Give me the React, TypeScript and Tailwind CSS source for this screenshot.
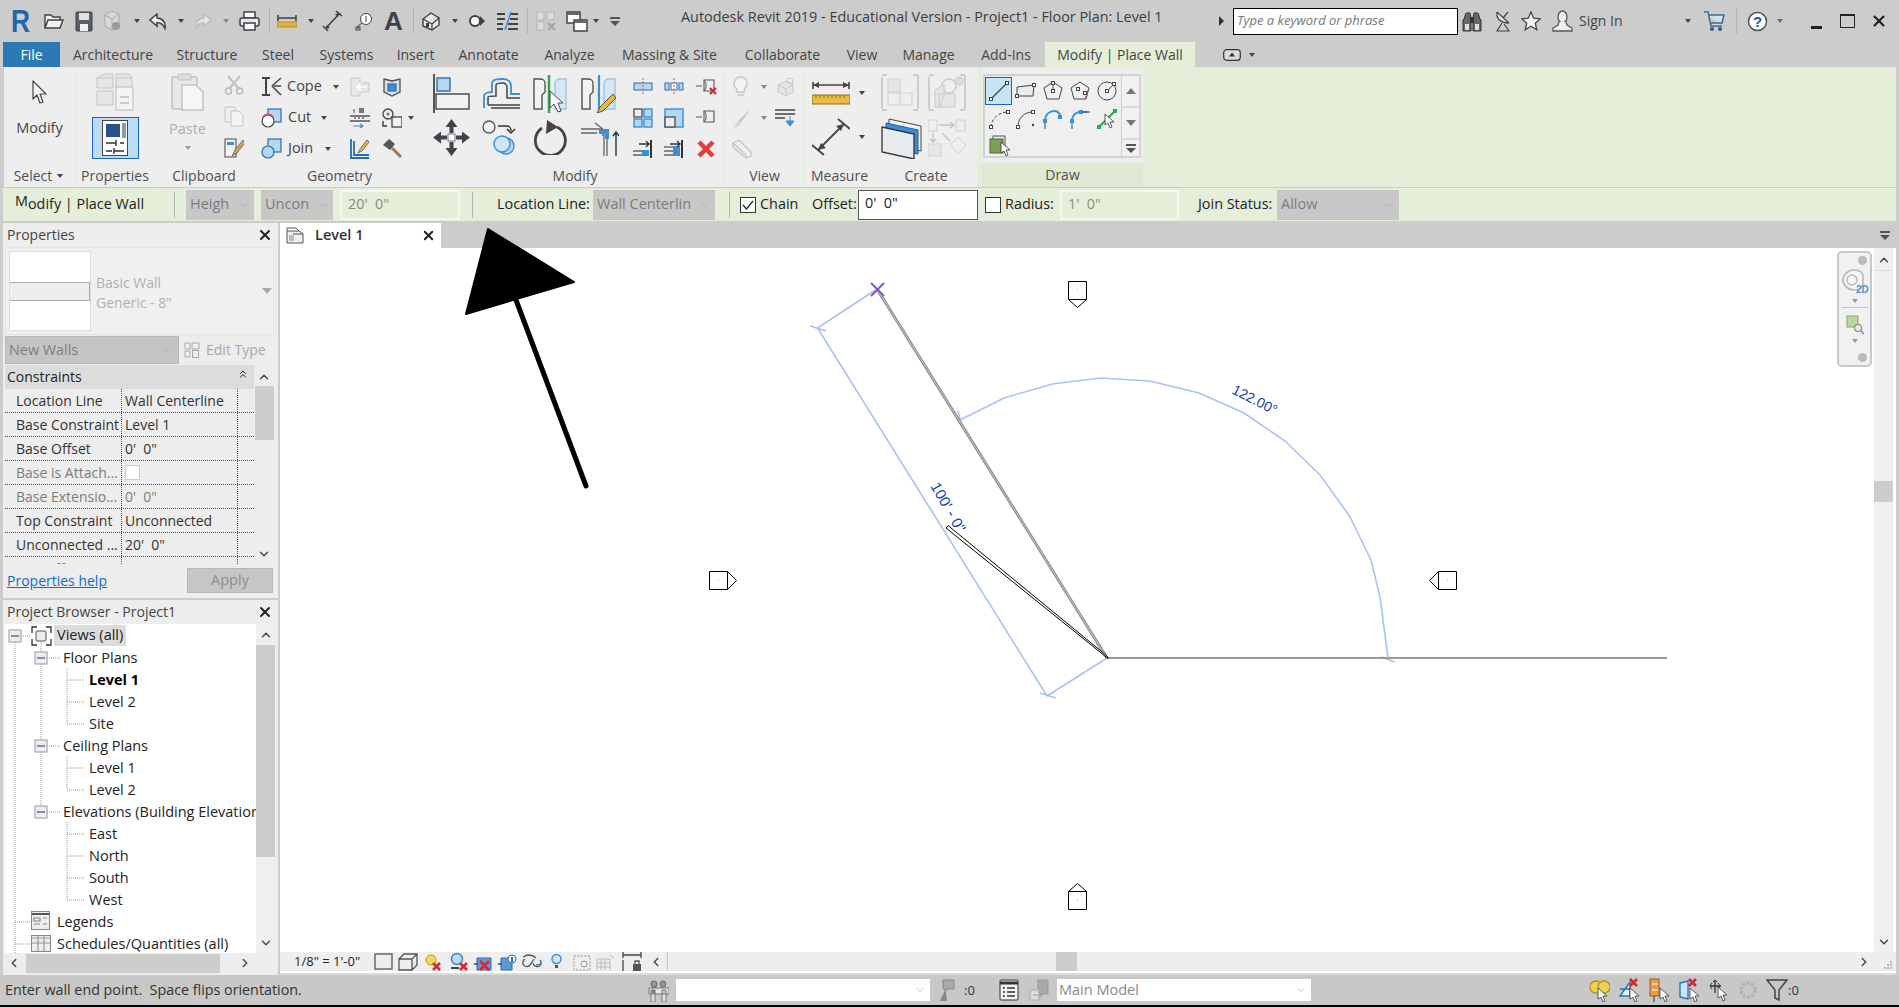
import React from 'react';
import { ChevronDown, ChevronLeft, ChevronRight, ChevronUp, ChevronsUp, X } from 'lucide-react';

type IcProps = { w: number; h: number; children?: React.ReactNode; className?: string };

const Ic = ({ w, h, children, className = '' }: IcProps) => (
    <svg width={w} height={h} viewBox={`0 0 ${w} ${h}`} fill="none" className={`shrink-0 ${className}`}>
        {children}
    </svg>
);

const Dd = ({ className = '' }: { className?: string }) => (
    <Ic w={6} h={4} className={className}>
        <path d="M0 0h6L3 4z" fill="#444" />
    </Ic>
);

const Sep = ({ className = '' }: { className?: string }) => <div className={`w-px h-[26px] bg-[#b4b4b4] shrink-0 ${className}`} />;

const DK = '#3d4248';
const GR = '#bdbdbd';
const BL = '#3b8ed8';
const LB = '#b5d8f2';

// quick access toolbar icons
const OpenIco = ({ className }: { className?: string }) => (
    <Ic w={20} h={16} className={className}>
        <path d="M1 15V2h6l2 2h7v3M1 15l3-8h15l-3 8z" stroke={DK} strokeWidth="1.4" fill="#f0f0f0" />
    </Ic>
);
const SaveIco = ({ className }: { className?: string }) => (
    <Ic w={18} h={21} className={className}>
        <rect x="1" y="1" width="16" height="19" rx="1" fill="#5a6068" stroke={DK} />
        <rect x="4" y="2" width="10" height="7" fill="#dfe3e6" />
        <rect x="5" y="13" width="8" height="7" fill="#f2f2f2" />
    </Ic>
);
const SyncIco = ({ className }: { className?: string }) => (
    <Ic w={18} h={22} className={className}>
        <path d="M2 5l6-4 8 3v11l-7 5-7-4z" fill="#d8d8d8" stroke="#aaa" />
        <path d="M2 5l7 4 7-5M9 9v11" stroke="#aaa" />
        <circle cx="13" cy="16" r="4" fill="#9a9a9a" />
    </Ic>
);
const UndoIco = ({ flip, gray, className }: { flip?: boolean; gray?: boolean; className?: string }) => (
    <Ic w={19} h={17} className={className}>
        <g transform={flip ? 'translate(19 0) scale(-1 1)' : undefined}>
            <path d="M8 1L1 7l7 6V9.5c4 0 6 1.500 8 6 1-6-2-10-8-10.500z" stroke={gray ? GR : DK} strokeWidth="1.500" fill={gray ? '#e8e8e8' : '#f4f4f4'} />
        </g>
    </Ic>
);
const PrintIco = ({ className }: { className?: string }) => (
    <Ic w={21} h={20} className={className}>
        <rect x="5" y="1" width="11" height="6" stroke={DK} strokeWidth="1.500" fill="#fff" />
        <rect x="1" y="7" width="19" height="8" rx="2" fill="#e9e9e9" stroke={DK} strokeWidth="1.500" />
        <rect x="5" y="12" width="11" height="7" stroke={DK} strokeWidth="1.500" fill="#fff" />
    </Ic>
);
const RulerIco = ({ className }: { className?: string }) => (
    <Ic w={20} h={14} className={className}>
        <path d="M1 4h18M1 1v6M19 1v6" stroke={DK} strokeWidth="1.500" />
        <rect x="0" y="8" width="20" height="5" fill="#e2b33a" stroke="#9a7a20" strokeWidth=".7" />
    </Ic>
);
const AlignedIco = ({ className }: { className?: string }) => (
    <Ic w={21} h={22} className={className}>
        <path d="M3 19L18 3M14 1l6 5M1 16l5 5" stroke={DK} strokeWidth="1.500" />
        <path d="M18 3l-5 1 3 3zM3 19l5-1-3-3z" fill={DK} />
    </Ic>
);
const TagIco = ({ className }: { className?: string }) => (
    <Ic w={17} h={20} className={className}>
        <circle cx="11" cy="8" r="5.500" stroke={DK} fill="#fff" />
        <path d="M7 12l-4 3v3" stroke={DK} />
        <rect x="1" y="16" width="4" height="3" stroke={DK} />
        <path d="M11 5v6" stroke={DK} />
    </Ic>
);
const HouseIco = ({ className }: { className?: string }) => (
    <Ic w={20} h={20} className={className}>
        <path d="M2 8l8-6 8 5v7l-7 5-9-4z" fill="#e8e8e8" stroke={DK} strokeWidth="1.400" />
        <path d="M2 8l9 5 7-6M11 13v6" stroke={DK} strokeWidth="1.200" />
        <rect x="5" y="12" width="3" height="4" fill={DK} />
    </Ic>
);
const SectionIco = ({ className }: { className?: string }) => (
    <Ic w={18} h={18} className={className}>
        <circle cx="8" cy="9" r="5" stroke={DK} strokeWidth="2" fill="#fff" />
        <path d="M13 4l5 5-5 5z" fill={DK} />
    </Ic>
);
const ThinIco = ({ className }: { className?: string }) => (
    <Ic w={21} h={18} className={className}>
        <path d="M0 2h8M13 2h8M0 7h8M13 7h8M0 12h6M11 12h10M0 17h6M11 17h10" stroke={DK} strokeWidth="2" />
        <path d="M14 0L8 18" stroke={BL} strokeWidth="1.500" />
    </Ic>
);
const CloseHiddenIco = ({ className }: { className?: string }) => (
    <Ic w={20} h={20} className={className}>
        <rect x="1" y="1" width="7" height="8" fill="#ddd" stroke="#b5b5b5" />
        <rect x="11" y="1" width="7" height="8" fill="#ddd" stroke="#b5b5b5" />
        <rect x="1" y="11" width="7" height="8" fill="#ddd" stroke="#b5b5b5" />
        <path d="M12 12l7 7M19 12l-7 7" stroke="#a5a5a5" strokeWidth="2" />
    </Ic>
);
const SwitchIco = ({ className }: { className?: string }) => (
    <Ic w={22} h={21} className={className}>
        <rect x="1" y="1" width="13" height="11" fill="#fff" stroke={DK} strokeWidth="1.500" />
        <rect x="1" y="1" width="13" height="3" fill="#666" />
        <rect x="8" y="9" width="13" height="11" fill="#fff" stroke={DK} strokeWidth="1.500" />
        <rect x="8" y="9" width="13" height="3" fill="#666" />
    </Ic>
);
const CustomizeIco = ({ className }: { className?: string }) => (
    <Ic w={10} h={9} className={className}>
        <path d="M0 0h10v2H0zM0 4h10L5 9z" fill="#555" />
    </Ic>
);
const BinoIco = ({ className }: { className?: string }) => (
    <Ic w={20} h={21} className={className}>
        <path d="M2 8L4 2h4l1 6v12H1V9zM18 8l-2-6h-4l-1 6v12h8V9z" fill="#666" stroke="#333" />
        <rect x="3" y="13" width="4" height="6" fill="#ddd" />
        <rect x="13" y="13" width="4" height="6" fill="#ddd" />
        <rect x="8.500" y="6" width="3" height="6" fill="#333" />
    </Ic>
);
const SatIco = ({ className }: { className?: string }) => (
    <Ic w={17} h={22} className={className}>
        <path d="M3 2c-1 6 3 11 12 11" stroke="#444" strokeWidth="1.300" fill="#e8e8e8" />
        <path d="M3 2l12 11M9 8l5-6M8 13l-5 8h12l-5-7" stroke="#444" strokeWidth="1.200" />
    </Ic>
);
const StarIco = ({ className }: { className?: string }) => (
    <Ic w={20} h={20} className={className}>
        <path d="M10 1l2.700 6.200 6.600.6-5 4.400 1.500 6.600L10 15.300l-5.800 3.500 1.500-6.600-5-4.400 6.600-.6z" stroke="#444" strokeWidth="1.300" fill="#f4f4f4" />
    </Ic>
);
const PersonIco = ({ className }: { className?: string }) => (
    <Ic w={21} h={22} className={className}>
        <ellipse cx="10.500" cy="7" rx="4.500" ry="6" stroke="#555" strokeWidth="1.300" fill="#eee" />
        <path d="M7 12l-1 3-5 3v3h19v-3l-5-3-1-3" stroke="#555" strokeWidth="1.300" fill="#eee" />
    </Ic>
);
const CartIco = ({ className }: { className?: string }) => (
    <Ic w={22} h={21} className={className}>
        <path d="M1 1h4l3 14h11M5 4h16l-2 8H7" stroke="#3f6a8f" strokeWidth="1.500" fill="#d5e0ea" />
        <circle cx="9" cy="18" r="2" fill="#3f5a7a" />
        <circle cx="17" cy="18" r="2" fill="#3f5a7a" />
    </Ic>
);
const HelpIco = ({ className }: { className?: string }) => (
    <Ic w={21} h={21} className={className}>
        <circle cx="10.500" cy="10.500" r="9" fill="#fff" stroke="#555" strokeWidth="1.500" />
        <text x="10.500" y="16" textAnchor="middle" fontSize="15" fontWeight="700" fill="#1d4fb5" fontFamily="Liberation Sans, sans-serif">?</text>
    </Ic>
);

// ribbon icons
const CursorIco = () => (
    <Ic w={15} h={26}>
        <path d="M1 1l0 18 4-4 3 8 3-1-3-8h6z" fill="#f4f4f4" stroke="#444" strokeWidth="1.200" strokeLinejoin="round" />
    </Ic>
);
const PropsGrayIco = () => (
    <Ic w={38} h={38}>
        <path d="M1 5l7-4h9v14H1zM20 1h13l3 3v12H20zM1 18h16v14H1z" fill="#e6e6e6" stroke="#c4c4c4" />
        <path d="M1 5h16M20 5h16" stroke="#c4c4c4" />
        <rect x="20" y="14" width="17" height="23" fill="#f4f4f4" stroke="#bbb" />
        <path d="M24 24h9M24 30h9" stroke="#bbb" strokeWidth="1.500" />
    </Ic>
);
const PropsBtnIco = () => (
    <div className="w-[47px] h-[42px] bg-[#bcdcf5] border border-[#1668c6] flex items-center justify-center mt-[6px]">
        <Ic w={26} h={36}>
            <rect x=".5" y=".5" width="25" height="35" fill="#fff" stroke="#444" />
            <rect x="4" y="4" width="14" height="13" fill="#27528f" />
            <rect x="20" y="3" width="4" height="15" fill="#8b9aab" />
            <path d="M4 23h10M12 31h10M4 31h6M18 23h4M14 20v6M12 28v6" stroke="#333" strokeWidth="1.400" />
        </Ic>
    </div>
);
const PasteIco = () => (
    <Ic w={33} h={38}>
        <rect x="1" y="4" width="25" height="32" rx="2" fill="#e8e8e8" stroke="#c2c2c2" strokeWidth="1.500" />
        <rect x="7" y="1" width="13" height="6" rx="1" fill="#ddd" stroke="#c2c2c2" />
        <path d="M11 12h14l7 7v18H11z" fill="#f6f6f6" stroke="#c2c2c2" strokeWidth="1.500" />
    </Ic>
);
const ScissorIco = () => (
    <Ic w={20} h={20}>
        <path d="M4 1l11 13M16 1L5 14" stroke="#c4c4c4" strokeWidth="2.400" />
        <circle cx="4.500" cy="16" r="3" stroke="#bbb" strokeWidth="1.500" />
        <circle cx="15.500" cy="16" r="3" stroke="#bbb" strokeWidth="1.500" />
    </Ic>
);
const CopyIco = () => (
    <Ic w={20} h={21}>
        <path d="M1 1h10v15H1z" fill="#eee" stroke="#c4c4c4" />
        <path d="M7 5h8l4 4v11H7z" fill="#f4f4f4" stroke="#c4c4c4" />
    </Ic>
);
const MatchIco = () => (
    <Ic w={20} h={21}>
        <rect x="1" y="1" width="11" height="18" fill="#f2f2f2" stroke="#444" />
        <rect x="3" y="4" width="7" height="3" fill="#3b8ed8" />
        <path d="M19 2l-8 10-3 6 5-3 8-10z" fill="#c9a25a" stroke="#555" strokeWidth=".7" />
    </Ic>
);
const CopeIco = () => (
    <Ic w={21} h={19}>
        <path d="M1 1h8M1 18h8M5 1v17" stroke="#444" strokeWidth="2" />
        <path d="M11 9l9-8M11 9l9 9M13 9h7" stroke="#444" strokeWidth="1.500" />
    </Ic>
);
const CutGeoIco = () => (
    <Ic w={21} h={20}>
        <rect x="7" y="1" width="13" height="13" fill={LB} stroke="#2a6db5" strokeWidth="1.200" />
        <circle cx="7" cy="13" r="6" fill="#fff" stroke="#444" strokeWidth="1.200" />
        <path d="M2 9a6 6 0 0 1 10 0" stroke="#e5484d" strokeWidth="1.400" />
    </Ic>
);
const JoinGeoIco = () => (
    <Ic w={21} h={21}>
        <rect x="7" y="1" width="13" height="13" fill={LB} stroke="#2a6db5" strokeWidth="1.200" />
        <circle cx="7" cy="14" r="6" fill={LB} stroke="#2a6db5" strokeWidth="1.200" />
    </Ic>
);
const WallJoinIco = () => (
    <Ic w={20} h={20}>
        <path d="M1 1h9v5h9v9h-9v4H1z" fill="#e6e6e6" stroke="#c7c7c7" />
        <path d="M17 10H7M11 6l-4 4 4 4" stroke="#fff" strokeWidth="1.500" />
    </Ic>
);
const OpenFaceIco = () => (
    <Ic w={20} h={20}>
        <path d="M2 2l8 2 8-2v13l-8 4-8-4z" fill="#d8dee3" stroke="#4a5056" strokeWidth="1.300" />
        <rect x="6" y="7" width="8" height="7" fill="#3b8ed8" stroke="#245e98" />
    </Ic>
);
const NotchIco = () => (
    <Ic w={20} h={20}>
        <rect x="9" y="0" width="5" height="5" fill="#777" />
        <path d="M4 1v4" stroke={BL} strokeWidth="1.500" />
        <path d="M0 8h20M0 13h20" stroke="#555" strokeWidth="1.500" />
        <path d="M4 10h12" stroke="#888" strokeDasharray="2 2" strokeWidth="2" />
        <path d="M3 18h10M10 16l3 2-3 2" stroke={BL} strokeWidth="1.200" />
    </Ic>
);
const CutFaceIco = () => (
    <Ic w={20} h={20}>
        <circle cx="6" cy="6" r="5" stroke="#444" strokeWidth="1.300" />
        <circle cx="6" cy="6" r="1.500" fill="#777" />
        <rect x="10" y="9" width="10" height="10" fill="#f4f4f4" stroke="#444" strokeWidth="1.300" />
        <path d="M1 13v5h4" stroke="#333" strokeWidth="1.300" />
    </Ic>
);
const PaintIco = () => (
    <Ic w={20} h={21}>
        <path d="M1 1v19h18M4 3v14h15" stroke="#1f6dc2" strokeWidth="1.800" />
        <path d="M17 2l-7 9-2 4 4-2 7-9z" fill="#e8b93f" stroke="#555" strokeWidth=".8" />
    </Ic>
);
const HammerIco = () => (
    <Ic w={20} h={21}>
        <path d="M1 7l6-6 6 5-5 6z" fill="#555" />
        <path d="M10 10l9 9" stroke="#a97355" strokeWidth="3" />
    </Ic>
);
const AlignIco = () => (
    <Ic w={37} h={39}>
        <path d="M1 0v39" stroke="#444" strokeWidth="1.800" />
        <rect x="4" y="4" width="13" height="13" fill={LB} stroke="#2a6db5" strokeWidth="1.400" />
        <rect x="3" y="20" width="33" height="15" fill="#f0f2f4" stroke="#444" strokeWidth="1.400" />
    </Ic>
);
const OffsetIco = () => (
    <Ic w={38} h={32}>
        <path d="M2 30V18c0-4 8-4 8-4V6c0-5 6-5 11-5s8 3 8 7v8h9" stroke={BL} strokeWidth="1.800" />
        <path d="M6 27v-8c0-1 4-1 8-1V7c0-2 5-2 7-2s4 2 4 4v11h13M6 27h32M9 30h29" stroke="#444" strokeWidth="1.500" />
    </Ic>
);
const MirrorPickIco = () => (
    <Ic w={34} h={38}>
        <path d="M1 4h6c3 0 5 2 5 4v9l-3 3v14H1z" fill="#f2f2f2" stroke="#555" strokeWidth="1.400" />
        <path d="M16 0v38" stroke="#2da84a" strokeWidth="2.500" />
        <path d="M33 4h-6c-3 0-5 2-5 4v26h11z" fill="#d5e7f5" stroke="#9dc3e4" strokeWidth="1.400" />
        <path d="M17 16v17l4-4 4 8 3-1-3-8h5z" fill="#fff" stroke="#444" />
    </Ic>
);
const MirrorDrawIco = () => (
    <Ic w={36} h={38}>
        <path d="M1 4h6c3 0 5 2 5 4v9l-3 3v14H1z" fill="#f2f2f2" stroke="#555" strokeWidth="1.400" />
        <path d="M18 0v36" stroke={BL} strokeWidth="2.200" />
        <path d="M34 4h-6c-3 0-5 2-5 4v26h11z" fill="#d5e7f5" stroke="#9dc3e4" strokeWidth="1.400" />
        <path d="M32 19l-13 13-3 6 6-2 13-13z" fill="#e8b93f" stroke="#555" />
    </Ic>
);
const MoveIco = () => (
    <Ic w={37} h={37}>
        <path d="M18.500 0l6 8h-4v6h-4V8h-4zM18.500 37l6-8h-4v-6h-4v6h-4zM0 18.500l8-6v4h6v4H8v4zM37 18.500l-8-6v4h-6v4h6v4z" fill="#3f444a" />
        <rect x="15" y="15" width="7" height="7" fill="#fff" stroke="#777" />
    </Ic>
);
const CopyModIco = () => (
    <Ic w={35} h={35}>
        <circle cx="7" cy="7" r="6" fill="#eef0f2" stroke="#555" strokeWidth="1.300" />
        <path d="M16 6h9c2 0 4 2 4 5M25 9l4 4 4-4" stroke="#333" strokeWidth="1.500" />
        <circle cx="24" cy="26" r="8" fill="#b5d8f2" stroke="#3b8ed8" strokeWidth="1.400" />
        <circle cx="20" cy="24" r="8" fill="#cfe5f6" stroke="#3b8ed8" strokeWidth="1.400" />
    </Ic>
);
const RotateIco = () => (
    <Ic w={34} h={35}>
        <path d="M9 8a15 15 0 1 0 15-1" stroke="#444" strokeWidth="2.800" />
        <path d="M14 0l11 7-12 7z" fill="#444" />
    </Ic>
);
const TrimIco = () => (
    <Ic w={38} h={36}>
        <path d="M0 9h22M0 13h16M14 3l8 6" stroke="#666" strokeWidth="1.300" />
        <path d="M18 10h7c1 0 1 1 1 2v24M21 15h2v21" stroke="#666" strokeWidth="1.300" />
        <path d="M18 9h10v10h-4v-5h-6z" fill={BL} />
        <path d="M35 36V12M32 16l3-4 3 4" stroke="#333" strokeWidth="1.400" />
    </Ic>
);
const SplitIco = ({ gap }: { gap?: boolean }) => (
    <Ic w={20} h={17}>
        <rect x="1" y="5" width={gap ? 4 : 18} height="7" fill={LB} stroke="#2a6db5" />
        {gap && <rect x="15" y="5" width="4" height="7" fill={LB} stroke="#2a6db5" />}
        {gap && <rect x="7" y="5" width="6" height="7" fill="#fff" stroke="#2a6db5" />}
        <path d="M10 0v17" stroke="#e5484d" strokeDasharray="2 1.500" />
    </Ic>
);
const PinIco = ({ x }: { x?: boolean }) => (
    <Ic w={21} h={17}>
        <path d="M0 8h6M8 2h10v11H8zM18 4v8" stroke="#555" strokeWidth="1.100" />
        <path d="M8 2l2 3v5l-2 3" stroke="#555" />
        {x && <path d="M14 10l6 6M20 10l-6 6" stroke="#d8262c" strokeWidth="2.200" />}
    </Ic>
);
const ArrayIco = () => (
    <Ic w={20} h={20}>
        <rect x="1" y="1" width="8" height="8" stroke="#555" strokeWidth="1.400" />
        <rect x="11" y="1" width="8" height="8" fill={LB} stroke={BL} strokeWidth="1.400" />
        <rect x="1" y="11" width="8" height="8" fill={LB} stroke={BL} strokeWidth="1.400" />
        <rect x="11" y="11" width="8" height="8" fill={LB} stroke={BL} strokeWidth="1.400" />
    </Ic>
);
const ScaleIco = () => (
    <Ic w={20} h={20}>
        <rect x="1" y="1" width="18" height="18" fill={LB} stroke={BL} strokeWidth="1.400" />
        <rect x="1" y="9" width="10" height="10" fill="#eee" stroke="#555" strokeWidth="1.400" />
    </Ic>
);
const ExtIco = ({ multi }: { multi?: boolean }) => (
    <Ic w={20} h={20}>
        <path d="M18 1v18" stroke="#333" strokeWidth="2" />
        <path d="M0 12h9M0 16h9" stroke="#666" strokeWidth="1.400" />
        {multi && <path d="M0 8h9" stroke="#666" strokeWidth="1.400" />}
        <rect x="9" y={multi ? 7 : 11} width="7" height={multi ? 10 : 6} fill={BL} />
        <path d="M6 5h10M13 2l3 3-3 3" stroke="#333" strokeWidth="1.300" />
    </Ic>
);
const DelIco = () => (
    <Ic w={20} h={20}>
        <path d="M3 3l14 14M17 3L3 17" stroke="#e63b3b" strokeWidth="4.500" />
    </Ic>
);
const BulbIco = () => (
    <Ic w={17} h={21}>
        <path d="M8.500 1a6.500 6.500 0 0 0-4 11.500V16h8v-3.500a6.500 6.500 0 0 0-4-11.500zM5 19h7" stroke="#c8c8c8" strokeWidth="1.400" fill="#f4f4f4" />
    </Ic>
);
const ViewCubeIco = () => (
    <Ic w={20} h={20}>
        <path d="M3 8l8-4 7 3v8l-7 4-8-4z" fill="#e4e4e4" stroke="#c8c8c8" />
        <path d="M3 8l8 4 7-5M11 12v7" stroke="#c8c8c8" />
        <circle cx="15" cy="4" r="3" stroke="#ccc" />
    </Ic>
);
const BrushIco = () => (
    <Ic w={20} h={20}>
        <path d="M19 1L9 10l-3 3 2 2 3-3z" fill="#c8c8c8" />
        <path d="M7 13c-4 1-3 4-6 6 4 1 7 0 8-4z" fill="#d8d8d8" />
    </Ic>
);
const ThinDownIco = () => (
    <Ic w={20} h={20}>
        <path d="M0 2h20M0 6h20M0 10h10" stroke="#444" strokeWidth="1.500" />
        <path d="M15 8v7M11 13h8l-4 5z" stroke={BL} fill={BL} />
    </Ic>
);
const WireBoxIco = () => (
    <Ic w={20} h={20}>
        <path d="M1 4l6-3 12 12v4l-5 2L1 8z" fill="#efefef" stroke="#c4c4c4" strokeWidth="1.300" />
        <path d="M1 4l13 12v3" stroke="#c4c4c4" strokeWidth="1.300" />
    </Ic>
);
const MeasureIco = () => (
    <Ic w={38} h={24}>
        <path d="M1 4h36M1 1v7M37 1v7" stroke="#444" strokeWidth="1.600" />
        <path d="M1 4l6-3v6zM37 4l-6-3v6z" fill="#444" />
        <rect x="0" y="14" width="38" height="9" fill="#e9bb3e" stroke="#8a7020" />
        <path d="M4 14v3M8 14v3M12 14v3M16 14v3M20 14v3M24 14v3M28 14v3M32 14v3" stroke="#8a7020" />
    </Ic>
);
const DimIco = () => (
    <Ic w={38} h={38}>
        <path d="M6 32L32 6" stroke="#444" strokeWidth="1.800" />
        <path d="M26 1l12 10M0 27l12 10" stroke="#444" strokeWidth="1.800" />
        <path d="M32 6l-8 2 5 5zM6 32l8-2-5-5z" fill="#444" />
    </Ic>
);
const CreateIco = ({ gear }: { gear?: boolean }) => (
    <Ic w={38} h={40}>
        <path d="M1 4v32M1 2h5M1 37h5M37 2v34M37 2h-5M37 37h-5" stroke="#cccccc" strokeWidth="2" />
        {gear ? (
            <>
                <circle cx="21" cy="13" r="7" stroke="#cdcdcd" strokeWidth="1.500" />
                <path d="M7 17l9-5v10l-4 12H7zM11 21h16v13H11z" fill="#e6e6e6" stroke="#c8c8c8" />
                <circle cx="31" cy="8" r="4" fill="#ddd" stroke="#cbcbcb" />
            </>
        ) : (
            <>
                <rect x="7" y="6" width="12" height="13" fill="#e6e6e6" stroke="#cfcfcf" />
                <rect x="7" y="20" width="12" height="12" fill="#eee" stroke="#cfcfcf" />
                <rect x="19" y="20" width="12" height="12" fill="#eee" stroke="#cfcfcf" />
            </>
        )}
    </Ic>
);
const StackIco = () => (
    <Ic w={41} h={41}>
        <path d="M8 1l32 7v25L8 27z" fill="#f2f2f2" stroke="#444" />
        <path d="M5 5l32 7v24L5 30z" fill={BL} stroke="#1f5f9e" />
        <path d="M1 9l32 7v25L1 34z" fill="#e8ebee" stroke="#333" strokeWidth="1.300" />
    </Ic>
);
const FlowIco = () => (
    <Ic w={38} h={38}>
        <rect x="0" y="1" width="9" height="11" fill="#eee" stroke="#cfcfcf" />
        <rect x="28" y="1" width="9" height="11" fill="#eee" stroke="#cfcfcf" />
        <rect x="0" y="25" width="13" height="12" fill="#e6e6e6" stroke="#cfcfcf" />
        <path d="M11 6h15M22 3l4 3-4 3M5 14v9M2 20l3 3 3-3M14 14l8 8" stroke="#c4c4c4" strokeWidth="1.400" />
        <path d="M30 18l8 8-8 9-8-9z" fill="#eee" stroke="#cfcfcf" />
    </Ic>
);

// draw gallery
const P = ({ x, y, c = '#444' }: { x: number; y: number; c?: string }) => (
    <rect x={x - 1.500} y={y - 1.500} width="3" height="3" fill="#fff" stroke={c} />
);
const galleryIcons: React.ReactNode[] = [
    <><path d="M3 19L19 3" stroke="#444" strokeWidth="1.200" /><P x={3} y={19} /><P x={19} y={3} /></>,
    <><path d="M2 7l17-2-1 11H2z" fill="#e8edf2" stroke="#444" /><P x={2} y={16} /><P x={19} y={5} /></>,
    <><path d="M11 2l9 6-3 11H5L2 8z" fill="#eef1f4" stroke="#444" /><path d="M11 2v8" stroke="#444" /><P x={11} y={3} /><P x={11} y={11} /></>,
    <><path d="M11 2l9 6-3 11H5L2 8z" fill="#eef1f4" stroke="#444" /><P x={9} y={9} /><P x={16} y={13} /><path d="M19 10l-3 9" stroke="#e5484d" strokeDasharray="2 1" /></>,
    <><circle cx="11" cy="11" r="9" fill="#eef1f4" stroke="#444" /><path d="M11 11l7-7" stroke="#444" /><P x={11} y={11} /><P x={18} y={4} /></>,
    <><path d="M3 19c0-8 8-15 17-15" stroke="#444" strokeDasharray="3 2" /><P x={3} y={19} /><P x={20} y={4} /></>,
    <><path d="M3 19C3 10 9 4 18 4" stroke="#444" /><P x={3} y={19} /><P x={18} y={4} /><circle cx="18" cy="17" r="1.200" fill="#444" /></>,
    <><path d="M3 13C3 6 8 3 12 3s6 2 6 6" stroke={BL} strokeWidth="1.800" /><rect x="1" y="11" width="4" height="4" fill={BL} /><rect x="16" y="7" width="4" height="4" fill={BL} /><path d="M3 15v6" stroke="#444" /></>,
    <><path d="M3 13c0-6 4-9 9-9h6" stroke={BL} strokeWidth="1.800" /><rect x="1" y="11" width="4" height="4" fill={BL} /><rect x="10" y="2" width="4" height="4" fill={BL} /><path d="M3 15v6M15 4h6" stroke="#444" /></>,
];

const RowLabel = ({ children, className = '' }: { children: React.ReactNode; className?: string }) => (
    <div className={`text-[14.5px] leading-none text-[#444] whitespace-nowrap ${className}`}>{children}</div>
);

const Panel = ({ label, className, children }: { label: React.ReactNode; className: string; children: React.ReactNode }) => (
    <div className={`bg-[#eeeeee] flex flex-col shrink-0 h-[119px] ${className}`}>
        <div className="h-[97px]">{children}</div>
        <div className="h-[22px] flex items-center justify-center text-[14px] text-[#505050] leading-none whitespace-nowrap">{label}</div>
    </div>
);

const Combo = ({ text, className = '' }: { text: string; className?: string }) => (
    <div className={`h-[30px] bg-[#c8c8c8] flex items-center shrink-0 pl-[4px] text-[14.5px] text-[#7c7c7c] whitespace-nowrap ${className}`}>
        <span className="flex-1">{text}</span>
        <ChevronDown className="w-[12px] h-[12px] text-[#a2a2a2] mx-[4px] shrink-0" strokeWidth={1.200} />
    </div>
);

const props = [
    { k: 'Location Line', v: 'Wall Centerline' },
    { k: 'Base Constraint', v: 'Level 1' },
    { k: 'Base Offset', v: `0'  0"` },
    { k: 'Base is Attach...', v: '', box: true, dim: true },
    { k: 'Base Extensio...', v: `0'  0"`, dim: true },
    { k: 'Top Constraint', v: 'Unconnected' },
    { k: 'Unconnected ...', v: `20'  0"` },
    { k: 'Top Offset', v: `0'  0"`, dim: true },
];

const tree = [
    { t: 'Floor Plans', p: 'pl-[58px]' },
    { t: 'Level 1', p: 'pl-[84px]', b: true },
    { t: 'Level 2', p: 'pl-[84px]' },
    { t: 'Site', p: 'pl-[84px]' },
    { t: 'Ceiling Plans', p: 'pl-[58px]' },
    { t: 'Level 1', p: 'pl-[84px]' },
    { t: 'Level 2', p: 'pl-[84px]' },
    { t: 'Elevations (Building Elevations)', p: 'pl-[58px]' },
    { t: 'East', p: 'pl-[84px]' },
    { t: 'North', p: 'pl-[84px]' },
    { t: 'South', p: 'pl-[84px]' },
    { t: 'West', p: 'pl-[84px]' },
    { t: 'Legends', p: 'pl-[52px]' },
    { t: 'Schedules/Quantities (all)', p: 'pl-[52px]' },
];

const Minus = ({ x, y }: { x: number; y: number }) => (
    <g>
        <rect x={x} y={y} width="12" height="12" fill="#eeeeee" stroke="#9a9a9a" />
        <path d={`M${x + 2} ${y + 6}h8`} stroke="#2b4fa8" strokeWidth="1.200" />
    </g>
);

// dotted lines and expander boxes behind the project browser rows
const TreeLines = () => (
    <svg width="251" height="329" viewBox="5 624 251 329" fill="none" className="absolute left-0 top-0">
        <g stroke="#999" strokeDasharray="1 1">
            <path d="M15 642V953M21 636h9M41 642V812M47 658h13M47 746h13M47 812h13M67 668V724H85M67 680H85M67 702H85M67 756V790H85M67 768H85M67 822V900H85M67 834H85M67 856H85M67 878H85M15 922H31M15 944H31" />
        </g>
        <Minus x={9} y={630} />
        <Minus x={35} y={652} />
        <Minus x={35} y={740} />
        <Minus x={35} y={806} />
        <path d="M32 633v-6h5M46 627h5v6M32 639v6h5M51 639v6h-5" stroke="#333" strokeWidth="1.300" />
        <rect x="36" y="631" width="10" height="10" rx="1" fill="#e8edf0" stroke="#555" />
        <rect x="31.500" y="911.500" width="18" height="18" fill="#eee" stroke="#888" />
        <path d="M32 914h17" stroke="#555" strokeWidth="2" />
        <path d="M34 918h6v3h-6zM43 918h4M34 924h6M43 924h4" stroke="#888" strokeWidth="1.200" />
        <rect x="31.500" y="935.500" width="19" height="16" fill="#eee" stroke="#888" />
        <path d="M32 938h18M32 943h18M38 936v15M44 936v15" stroke="#999" strokeWidth="1.200" />
    </svg>
);

// plan view: page coordinates, x 280 y 248
const Plan = () => (
    <svg width="1594" height="704" viewBox="280 248 1594 704" fill="none" className="absolute left-0 top-0">
        <g stroke="#a8c2f6" strokeWidth="1.600">
            <path d="M877 289L817.500 328M1107 658L1047 696M817.500 328L1047 696" />
            <path d="M810 326l16 5M1040 693l16 5" />
            <path d="M960 420L1004 398L1052.500 384L1100.700 378L1149.700 381L1199 393L1244 413L1285 441L1320 475L1349.500 516L1371 560L1380 597L1388 658" />
            <path d="M958 411l4 16M1381 657l14 5" />
        </g>
        <path d="M877 289L1107 658" stroke="#8c8c8c" strokeWidth="3" />
        <path d="M877 289L1107 658" stroke="#d4d4d4" strokeWidth=".8" />
        <path d="M1107 658H1667" stroke="#999999" strokeWidth="2" />
        <path d="M946 528l2-2.500L1107 656l1 2.500z" fill="#fff" stroke="#000" strokeWidth="1" />
        <path d="M871 283l13 13M884 283l-13 13" stroke="#8a4fd0" strokeWidth="1.800" />
        <text x="0" y="0" transform="translate(1231 393) rotate(27)" fill="#0b3cc0" fontSize="14" fontFamily="Liberation Sans, sans-serif">122.00°</text>
        <text x="0" y="0" transform="translate(930 486) rotate(60)" fill="#0b3cc0" fontSize="15" fontFamily="Liberation Sans, sans-serif">100' - 0"</text>
        <path d="M1068.500 281.500h18v18l-9 8-9-8zM1068.500 299.500h18" stroke="#000" fill="#fff" />
        <path d="M1068.500 909.500h18v-18l-9-8-9 8zM1068.500 891.500h18" stroke="#000" fill="#fff" />
        <path d="M709.500 571.500v18h18l9-9-9-9zM727.500 571.500v18" stroke="#000" fill="#fff" />
        <path d="M1456.500 571.500v18h-18l-9-9 9-9zM1438.500 571.500v18" stroke="#000" fill="#fff" />
        <path d="M1077 290h1M1077 900h1M718 580h1M1447 580h1" stroke="#bbb" />
    </svg>
);

const NavBar = () => (
    <div className="absolute right-[2px] top-[3px] w-[35px] h-[116px] bg-[#f1f1f1] border-2 border-[#c8c8c8] rounded-[5px] flex flex-col items-center">
        <div className="w-[9px] h-[9px] rounded-full bg-[#bbb] self-end mr-[3px] mt-[3px]" />
        <Ic w={28} h={26} className="mt-[4px]">
            <path d="M13 1c6 0 9 2 9 7v6c0 4-4 7-9 7-6 0-11-5-11-10S7 1 13 1z" fill="#f5f5f5" stroke="#b5b5b5" strokeWidth="1.500" />
            <circle cx="11" cy="11" r="5" stroke="#b5b5b5" strokeWidth="1.300" />
            <text x="15" y="24" fontSize="10" fontWeight="700" fill="#5b8ec9" fontFamily="Liberation Sans, sans-serif">2D</text>
        </Ic>
        <Dd className="mt-[4px] opacity-50" />
        <div className="w-[26px] h-px bg-[#c4c4c4] mt-[4px]" />
        <Ic w={18} h={20} className="mt-[7px]">
            <rect x="1" y="1" width="11" height="11" fill="#bcd79d" stroke="#8aa870" />
            <circle cx="12" cy="13" r="3.500" stroke="#888" strokeWidth="1.200" fill="#eee" />
            <path d="M15 16l3 3" stroke="#888" strokeWidth="1.500" />
        </Ic>
        <Dd className="mt-[4px] opacity-50" />
        <div className="w-[9px] h-[9px] rounded-full bg-[#bbb] self-end mr-[3px] mt-auto mb-[3px]" />
    </div>
);

const BigArrow = () => (
    <svg width="140" height="270" viewBox="460 225 140 270" fill="none" className="absolute left-[460px] top-[225px]">
        <path d="M488 229L574 282L466 314z" fill="#000" stroke="#000" strokeWidth="2" strokeLinejoin="round" />
        <path d="M516 300L586 486" stroke="#000" strokeWidth="5" strokeLinecap="round" />
    </svg>
);

const VIEW_ICONS: React.ReactNode[] = [
    <Ic w={19} h={17} key="a" className="ml-[11px]"><rect x="1" y="1" width="17" height="15" fill="#eee" stroke="#555" strokeWidth="1.300" /></Ic>,
    <Ic w={20} h={18} key="b" className="ml-[5px]"><path d="M1 6h13v11H1zM1 6l5-5h13v11l-5 5M14 6l5-5" stroke="#555" strokeWidth="1.300" fill="#eee" /></Ic>,
    <Ic w={19} h={19} key="c" className="ml-[5px]"><circle cx="8" cy="8" r="5" fill="#f5d75a" stroke="#c89a20" /><path d="M10 11l7 7M17 11l-7 7" stroke="#d8262c" strokeWidth="2.500" /></Ic>,
    <Ic w={18} h={19} key="d" className="ml-[8px]"><circle cx="7" cy="7" r="5.500" fill="#bcd9f2" stroke="#3f7fc0" strokeWidth="1.400" /><path d="M1 16h8" stroke="#444" strokeWidth="2" /><path d="M10 11l7 7M17 11l-7 7" stroke="#d8262c" strokeWidth="2.500" /></Ic>,
    <Ic w={19} h={19} key="e" className="ml-[6px]"><path d="M3 6h14v12H3z" fill="#5c9bd6" stroke="#2a6db5" /><path d="M0 12h4" stroke="#444" strokeWidth="1.500" /><path d="M6 9l9 9M15 9l-9 9" stroke="#d8262c" strokeWidth="2.500" /></Ic>,
    <Ic w={19} h={19} key="f" className="ml-[5px]"><path d="M3 6h11v12H3z" fill="#5c9bd6" stroke="#2a6db5" /><path d="M0 12h4" stroke="#444" strokeWidth="1.500" /><circle cx="14" cy="7" r="4" fill="#fff" stroke="#2a6db5" /><path d="M14 5v5" stroke="#2a6db5" strokeWidth="2" /></Ic>,
    <Ic w={21} h={18} key="g" className="ml-[5px]"><path d="M1 4c5-3 9-3 13 1M3 6a4 4 0 1 0 5 6l4-6M11 10a4 4 0 1 0 7-3" stroke="#555" strokeWidth="1.300" /><path d="M14 12l6-1" stroke={BL} strokeWidth="1.500" /></Ic>,
    <Ic w={11} h={18} key="h" className="ml-[8px]"><circle cx="5.500" cy="6" r="4.500" fill="#cfe5f6" stroke={BL} strokeWidth="1.400" /><path d="M4 12h3v3H4z" fill="#555" /></Ic>,
    <Ic w={18} h={18} key="i" className="ml-[11px]"><rect x="1" y="3" width="16" height="14" stroke="#b0b0b0" strokeDasharray="2 1.500" strokeWidth="1.300" /><circle cx="11" cy="11" r="3" stroke="#999" /></Ic>,
    <Ic w={18} h={18} key="j" className="ml-[5px]"><path d="M1 6h13v11M1 6v11M5 6v11M9 6v11M1 10h13M1 14h13" stroke="#bbb" /><path d="M14 2l4 3" stroke="#bbb" /></Ic>,
    <Ic w={20} h={20} key="k" className="ml-[8px]"><path d="M1 3h18M1 0v6M19 0v6M1 8v11" stroke="#444" strokeWidth="1.300" /><rect x="11" y="12" width="8" height="7" fill="#555" /><path d="M13 12V9h4v3" stroke="#555" strokeWidth="1.300" /></Ic>,
];

const Cursor = () => <path d="M0 0v11l3-2 2 5 2-1-2-5h4z" fill="#fff" stroke="#333" strokeWidth=".8" />;

const STATUS_ICONS: React.ReactNode[] = [
    <Ic w={21} h={24} key="a" className="ml-[173px]"><circle cx="6" cy="6" r="3" fill="#999" stroke="#666" /><path d="M4 9h5v6H4z" fill="#777" /><circle cx="15" cy="6" r="3" fill="#999" stroke="#666" /><path d="M1 16l0-6h20v6zM3 24h4V12H3zM14 24h4V12h-4z" stroke="#777" fill="#e4e4e4" /></Ic>,
    <Ic w={21} h={24} key="b"><circle cx="7" cy="9" r="6" fill="#f0d44c" stroke="#b8901c" strokeWidth="1.300" /><circle cx="15" cy="9" r="6" fill="#f0d44c" stroke="#b8901c" strokeWidth="1.300" /><g transform="translate(9 10)"><Cursor /></g></Ic>,
    <Ic w={21} h={24} key="c"><path d="M1 18L11 4v14zM1 11h10" stroke="#1f6dc2" strokeWidth="1.300" fill="#eef" /><path d="M11 1l7 7M18 1l-7 7" stroke="#d8262c" strokeWidth="2.500" /><g transform="translate(11 10)"><Cursor /></g></Ic>,
    <Ic w={21} h={24} key="d"><rect x="1" y="1" width="9" height="17" fill="#e89a4c" stroke="#a85a1c" /><path d="M3 6h6M3 12h6" stroke="#fff" /><path d="M5 18v6" stroke="#333" /><g transform="translate(11 10)"><Cursor /></g></Ic>,
    <Ic w={21} h={24} key="e"><path d="M1 5l8-2v18l-8-2z" fill="#cfe5f6" stroke="#1f6dc2" strokeWidth="1.300" /><path d="M10 1l7 7M17 1l-7 7" stroke="#d8262c" strokeWidth="2.500" /><g transform="translate(11 10)"><Cursor /></g></Ic>,
    <Ic w={21} h={24} key="f"><path d="M6 2v13M1 8h11" stroke="#333" strokeWidth="1.300" /><path d="M3 5l-2 3 2 3M9 5l2 3-2 3M4 4l2-2 2 2" stroke="#333" /><g transform="translate(9 9)"><Cursor /></g></Ic>,
    <Ic w={18} h={24} key="g"><circle cx="9" cy="12" r="7" stroke="#b2b2b2" strokeWidth="3.500" strokeDasharray="3 1.500" /></Ic>,
];

export default function App() {
    return (
        <div className="relative w-[1899px] h-[1007px] overflow-hidden bg-[#cccccc] flex flex-col font-['Open_Sans',sans-serif] text-[#333]">
            {/* Title bar */}
            <div className="h-[42px] flex items-center shrink-0">
                <span className="ml-[11px] w-[18px] text-[31px] leading-none font-bold text-[#1e66ad] font-['Liberation_Sans',sans-serif] scale-x-[0.85] origin-left">R</span>
                <OpenIco className="ml-[15px]" />
                <SaveIco className="ml-[11px]" />
                <SyncIco className="ml-[10px]" />
                <Dd className="ml-[13px]" />
                <UndoIco className="ml-[9px]" />
                <Dd className="ml-[10px]" />
                <UndoIco flip gray className="ml-[9px]" />
                <Dd className="ml-[11px] opacity-50" />
                <PrintIco className="ml-[10px]" />
                <Sep className="ml-[9px]" />
                <RulerIco className="ml-[7px]" />
                <Dd className="ml-[11px]" />
                <AlignedIco className="ml-[8px]" />
                <TagIco className="ml-[12px]" />
                <span className="ml-[12px] w-[17px] text-[26px] leading-none font-bold text-[#3d4248] font-['Liberation_Sans',sans-serif]">A</span>
                <Sep className="ml-[12px]" />
                <HouseIco className="ml-[7px]" />
                <Dd className="ml-[11px]" />
                <SectionIco className="ml-[9px]" />
                <ThinIco className="ml-[12px]" />
                <Sep className="ml-[9px]" />
                <CloseHiddenIco className="ml-[8px]" />
                <SwitchIco className="ml-[10px]" />
                <Dd className="ml-[5px]" />
                <CustomizeIco className="ml-[11px]" />
                <div className="ml-[61px] w-[480px] -mt-[7px] text-[14.4px] leading-none text-[#3c3c3c] whitespace-nowrap">
                    Autodesk Revit 2019 - Educational Version - Project1 - Floor Plan: Level 1
                </div>
                <Ic w={5} h={10} className="ml-[58px]">
                    <path d="M0 0l5 5-5 5z" fill="#333" />
                </Ic>
                <div className="ml-[9px] w-[225px] h-[27px] bg-white border border-black flex items-center pl-[3px] text-[13px] italic text-[#777] shrink-0">
                    Type a keyword or phrase
                </div>
                <BinoIco className="ml-[4px]" />
                <SatIco className="ml-[12px]" />
                <StarIco className="ml-[10px]" />
                <PersonIco className="ml-[11px]" />
                <span className="ml-[6px] w-[44px] text-[14px] leading-none text-[#444] whitespace-nowrap">Sign In</span>
                <Dd className="ml-[62px]" />
                <CartIco className="ml-[12px]" />
                <Sep className="ml-[11px]" />
                <HelpIco className="ml-[10px]" />
                <Dd className="ml-[9px] opacity-70" />
                <div className="ml-[28px] w-[11px] h-[3px] bg-[#222] mt-[13px] shrink-0" />
                <div className="ml-[18px] w-[15px] h-[14px] border border-[#222] border-t-2 shrink-0 -mt-[1px]" />
                <X className="ml-[15px] w-[18px] h-[18px] text-[#222] shrink-0" strokeWidth={2.800} />
            </div>

            {/* Ribbon tabs */}
            <div className="h-[25px] flex items-stretch pl-[3px] shrink-0 text-[14px] leading-none text-[#444] whitespace-nowrap">
                <div className="w-[57px] bg-[#2b7ab3] text-white flex items-center justify-center">File</div>
                <div className="w-[106px] flex items-center justify-center">Architecture</div>
                <div className="w-[82px] flex items-center justify-center">Structure</div>
                <div className="w-[60px] flex items-center justify-center">Steel</div>
                <div className="w-[77px] flex items-center justify-center">Systems</div>
                <div className="w-[61px] flex items-center justify-center">Insert</div>
                <div className="w-[85px] flex items-center justify-center">Annotate</div>
                <div className="w-[77px] flex items-center justify-center">Analyze</div>
                <div className="w-[123px] flex items-center justify-center">Massing &amp; Site</div>
                <div className="w-[103px] flex items-center justify-center">Collaborate</div>
                <div className="w-[56px] flex items-center justify-center">View</div>
                <div className="w-[77px] flex items-center justify-center">Manage</div>
                <div className="w-[78px] flex items-center justify-center">Add-Ins</div>
                <div className="w-[150px] bg-[#e5eed8] flex items-center justify-center">Modify | Place Wall</div>
                <Ic w={18} h={12} className="ml-[28px] self-center">
                    <rect x=".7" y=".7" width="16.600" height="10.600" rx="3" fill="#ddd" stroke="#333" strokeWidth="1.200" />
                    <path d="M9 3.500l3 4H6z" fill="#333" />
                </Ic>
                <Dd className="ml-[8px] self-center" />
            </div>

            {/* Ribbon */}
            <div className="ml-[4px] mr-[3px] h-[120px] pt-px bg-[#e5eed8] flex gap-px shrink-0">
                <Panel className="w-[71px]" label={<span className="flex items-center gap-[5px] pr-[2px]">Select <Dd /></span>}>
                    <div className="flex flex-col items-center pt-[12px] gap-[15px]">
                        <CursorIco />
                        <RowLabel>Modify</RowLabel>
                    </div>
                </Panel>
                <Panel className="w-[78px]" label="Properties">
                    <div className="flex flex-col items-center pt-[5px]">
                        <PropsGrayIco />
                        <PropsBtnIco />
                    </div>
                </Panel>
                <Panel className="w-[98px]" label="Clipboard">
                    <div className="flex pl-[16px] pt-[5px]">
                        <div className="w-[33px] flex flex-col items-center">
                            <PasteIco />
                            <RowLabel className="mt-[11px] text-[#b0b0b0]">Paste</RowLabel>
                            <Dd className="mt-[9px] opacity-50" />
                        </div>
                        <div className="ml-[20px] flex flex-col gap-[11px] pt-[2px]">
                            <ScissorIco />
                            <CopyIco />
                            <MatchIco />
                        </div>
                    </div>
                </Panel>
                <Panel className="w-[171px]" label="Geometry">
                    <div className="grid grid-cols-[26px_42px_21px_32px_40px] grid-rows-[31px_31px_31px] items-center pl-[7px] pt-[3px]">
                        <CopeIco />
                        <RowLabel>Cope</RowLabel>
                        <Dd className="ml-[4px]" />
                        <WallJoinIco />
                        <OpenFaceIco />
                        <CutGeoIco />
                        <RowLabel className="pl-px">Cut</RowLabel>
                        <Dd className="ml-[-8px]" />
                        <NotchIco />
                        <div className="flex items-center gap-[6px]"><CutFaceIco /><Dd /></div>
                        <JoinGeoIco />
                        <RowLabel className="pl-px">Join</RowLabel>
                        <Dd className="ml-[-4px]" />
                        <PaintIco />
                        <HammerIco />
                    </div>
                </Panel>
                <Panel className="w-[298px]" label="Modify">
                    <div className="flex pt-[3px] pl-[7px]">
                        <div className="grid grid-cols-[49px_51px_48px_51px] grid-rows-[45px_43px] items-center">
                            <AlignIco />
                            <OffsetIco />
                            <MirrorPickIco />
                            <MirrorDrawIco />
                            <MoveIco />
                            <CopyModIco />
                            <RotateIco />
                            <TrimIco />
                        </div>
                        <div className="grid grid-cols-[31px_32px_22px] grid-rows-[31px_31px_31px] items-center ml-[1px]">
                            <SplitIco />
                            <SplitIco gap />
                            <PinIco x />
                            <ArrayIco />
                            <ScaleIco />
                            <PinIco />
                            <ExtIco />
                            <ExtIco multi />
                            <DelIco />
                        </div>
                    </div>
                </Panel>
                <Panel className="w-[79px]" label="View">
                    <div className="grid grid-cols-[29px_14px_20px] grid-rows-[31px_31px_31px] items-center pl-[7px] pt-[3px]">
                        <BulbIco />
                        <Dd className="opacity-60" />
                        <ViewCubeIco />
                        <BrushIco />
                        <Dd className="opacity-60" />
                        <ThinDownIco />
                        <WireBoxIco />
                    </div>
                </Panel>
                <Panel className="w-[69px]" label="Measure">
                    <div className="grid grid-cols-[47px_7px] grid-rows-[49px_39px] items-center pl-[7px]">
                        <MeasureIco />
                        <Dd />
                        <DimIco />
                        <Dd />
                    </div>
                </Panel>
                <Panel className="w-[102px]" label="Create">
                    <div className="grid grid-cols-[47px_40px] grid-rows-[46px_44px] items-center pl-[6px] pt-[2px]">
                        <CreateIco />
                        <CreateIco gear />
                        <StackIco />
                        <FlowIco />
                    </div>
                </Panel>
                {/* Draw panel */}
                <div className="ml-[4px] w-[161px] h-[119px] flex flex-col shrink-0">
                    <div className="h-[95px] bg-[#eeeeee] pt-[6px] pl-px">
                        <div className="w-[158px] h-[84px] bg-[#efefef] border-2 border-[#d2d2d2] flex">
                            <div className="w-[136px] grid grid-cols-[27px_27px_27px_27px_27px] grid-rows-[28px_28px_26px] pt-px">
                                {galleryIcons.map((g, i) => (
                                    <div key={i} className={`flex items-center justify-center ${i === 0 ? 'bg-[#c6e3f7] border border-[#1668c6]' : ''}`}>
                                        <Ic w={22} h={22}>{g}</Ic>
                                    </div>
                                ))}
                                <div className="flex items-center justify-center">
                                    <Ic w={22} h={22}>
                                        <path d="M3 19L19 3" stroke="#2da84a" strokeWidth="2" />
                                        <rect x="1" y="17" width="4" height="4" fill="#2da84a" />
                                        <rect x="17" y="1" width="4" height="4" fill="#2da84a" />
                                        <g transform="translate(9 6)"><Cursor /></g>
                                    </Ic>
                                </div>
                                <div className="flex items-center justify-center">
                                    <Ic w={22} h={22}>
                                        <rect x="5" y="1" width="12" height="12" fill="#eee" stroke="#555" />
                                        <rect x="2" y="4" width="13" height="14" fill="#7ba05b" stroke="#4d7038" />
                                        <g transform="translate(13 7)"><Cursor /></g>
                                    </Ic>
                                </div>
                            </div>
                            <div className="flex-1 flex flex-col gap-[2px] bg-[#d8d8d8] border-l border-[#d2d2d2]">
                                <div className="h-[30px] bg-[#f1f1f1] flex items-center justify-center">
                                    <Ic w={10} h={6}><path d="M5 0l5 6H0z" fill="#777" /></Ic>
                                </div>
                                <div className="h-[30px] bg-[#f1f1f1] flex items-center justify-center">
                                    <Ic w={10} h={6}><path d="M0 0h10L5 6z" fill="#777" /></Ic>
                                </div>
                                <div className="flex-1 bg-[#f1f1f1] flex items-center justify-center">
                                    <CustomizeIco />
                                </div>
                            </div>
                        </div>
                    </div>
                    <div className="h-[24px] bg-[#e0e9d3] flex items-center justify-center text-[14px] text-[#505050] leading-none">Draw</div>
                </div>
            </div>

            {/* Options bar */}
            <div className="ml-[3px] mr-[3px] h-[34px] bg-[#e5eed8] border-t border-[#c6cebc] flex items-center shrink-0 text-[14.4px] leading-none text-[#222] whitespace-pre">
                <span className="ml-[12px] w-[127px]"><span className="inline-block -translate-y-[3px]">M</span>odify | Place Wall</span>
                <Sep className="ml-[32px]" />
                <Combo text="Heigh" className="ml-[11px] w-[68px]" />
                <Combo text="Uncon" className="ml-[7px] w-[72px]" />
                <div className="ml-[7px] w-[120px] h-[30px] border-2 border-[#f4f7ef] flex items-center pl-[6px] text-[#8c8c7e] shrink-0">20'  0"</div>
                <Sep className="ml-[12px]" />
                <span className="ml-[24px] w-[96px]">Location Line:</span>
                <Combo text="Wall Centerlin" className="w-[122px]" />
                <Sep className="ml-[14px]" />
                <div className="ml-[10px] w-[16px] h-[16px] border border-[#333] bg-white flex items-center justify-center shrink-0">
                    <Ic w={12} h={10}><path d="M1 5l3.500 4L11 1" stroke="#222" strokeWidth="1.200" /></Ic>
                </div>
                <span className="ml-[4px] w-[38px]">Chain</span>
                <span className="ml-[14px] w-[46px]">Offset:</span>
                <div className="w-[120px] h-[30px] bg-white border border-[#555] flex items-start pt-[5px] pl-[6px] shrink-0">0'  0"</div>
                <div className="ml-[7px] w-[16px] h-[16px] border border-[#333] bg-white shrink-0" />
                <span className="ml-[4px] w-[51px]">Radius:</span>
                <div className="ml-[4px] w-[119px] h-[30px] border-2 border-[#f4f7ef] flex items-center pl-[6px] text-[#8c8c7e] shrink-0">1'  0"</div>
                <span className="ml-[19px] w-[79px]">Join Status:</span>
                <Combo text="Allow" className="w-[122px]" />
            </div>

            <div className="h-[2px] shrink-0" />

            {/* Main */}
            <div className="h-[752px] flex shrink-0 pl-[3px]">
                {/* Left panels */}
                <div className="w-[275px] flex flex-col gap-[2px] shrink-0">
                    <div className="h-[375px] bg-[#ededed] flex flex-col pl-[2px] text-[14px] leading-none">
                        <div className="h-[24px] flex items-center justify-between pl-[2px] pr-[5px] text-[#444]">
                            <span>Properties</span>
                            <X className="w-[16px] h-[16px] text-[#222]" strokeWidth={3} />
                        </div>
                        <div className="w-[269px] h-[88px] bg-[#f0f0f0] border border-[#e4e4e4] flex items-center pl-[3px] relative">
                            <div className="w-[82px] h-[80px] bg-white border border-[#ddd] flex items-center">
                                <div className="w-full h-[19px] bg-[#eeeeee] border-y border-r border-[#aaa]" />
                            </div>
                            <div className="ml-[5px] mt-[3px] text-[#b0b0b0] flex flex-col gap-[6px] text-[14px]">
                                <span>Basic Wall</span>
                                <span>Generic - 8"</span>
                            </div>
                            <Ic w={10} h={6} className="ml-auto mr-[1px]"><path d="M0 0h10L5 6z" fill="#aaa" /></Ic>
                        </div>
                        <div className="flex h-[28px] mt-px items-stretch">
                            <div className="w-[174px] bg-[#c4c4c4] border border-[#b8b8b8] flex items-center pl-[3px] text-[14.4px] text-[#7e7e7e]">
                                <span className="flex-1">New Walls</span>
                                <ChevronDown className="w-[12px] h-[12px] text-[#a8a8a8] mr-[5px]" strokeWidth={1.200} />
                            </div>
                            <div className="ml-[5px] flex items-center text-[#a9a9a9] gap-[6px]">
                                <Ic w={16} h={16}>
                                    <path d="M1 1h5v6H1zM8 1h7v6H8zM1 9h5v6H1z" stroke="#aaa" />
                                    <rect x="8.500" y="8.500" width="6" height="7" stroke="#aaa" />
                                </Ic>
                                <span>Edit Type</span>
                            </div>
                        </div>
                        <div className="flex mt-px">
                            <div className="w-[249px]">
                                <div className="h-[24px] bg-[#dcdcdc] flex items-center justify-between pl-[2px] pr-[4px] text-[#222]">
                                    <span>Constraints</span>
                                    <ChevronsUp className="w-[12px] h-[12px] -mt-[6px] mr-[1px] text-[#222]" strokeWidth={2} />
                                </div>
                                <div className="h-[175px] overflow-hidden bg-[#ededed]">
                                    {props.map((r) => (
                                        <div key={r.k} className="h-[24px] grid grid-cols-[117px_116px_16px] border-b border-dotted border-[#555] text-[14px]">
                                            <div className={`pl-[11px] flex items-center border-r border-dotted border-[#555] whitespace-nowrap ${r.dim ? 'text-[#7d7d7d]' : 'text-[#333]'}`}>{r.k}</div>
                                            <div className={`pl-[3px] flex items-center border-r border-dotted border-[#555] whitespace-pre ${r.dim ? 'text-[#7d7d7d]' : 'text-[#333]'}`}>
                                                {r.box ? <div className="w-[15px] h-[15px] bg-white border border-[#ccc]" /> : r.v}
                                            </div>
                                            <div />
                                        </div>
                                    ))}
                                </div>
                            </div>
                            <div className="w-[20px] flex flex-col items-center">
                                <ChevronUp className="w-[14px] h-[14px] text-[#444] mt-[5px]" strokeWidth={2.400} />
                                <div className="w-[19px] h-[54px] bg-[#cdcdcd] mt-[2px]" />
                                <ChevronDown className="w-[14px] h-[14px] text-[#444] mt-auto mb-[3px]" strokeWidth={2.400} />
                            </div>
                        </div>
                        <div className="flex items-center justify-between h-[33px] pl-[2px] pr-[5px]">
                            <span className="text-[#0f6cd4] underline">Properties help</span>
                            <div className="w-[86px] h-[25px] bg-[#c6c6c6] border border-[#b8b8b8] flex items-center justify-center text-[14.5px] text-[#8e8e8e]">Apply</div>
                        </div>
                    </div>

                    <div className="flex-1 bg-[#ededed] flex flex-col pl-[2px] text-[14.5px] leading-none">
                        <div className="h-[24px] flex items-center justify-between pl-[2px] pr-[5px] text-[14px] text-[#444]">
                            <span>Project Browser - Project1</span>
                            <X className="w-[16px] h-[16px] text-[#222]" strokeWidth={3} />
                        </div>
                        <div className="flex h-[329px]">
                            <div className="relative w-[251px] h-[329px] bg-white overflow-hidden text-[#222]">
                                <TreeLines />
                                <div className="relative">
                                    <div className="h-[22px] flex items-center pl-[49px]"><span className="bg-[#dcdcdc] h-[21px] flex items-center px-[3px]">Views (all)</span></div>
                                    <div className="pt-px">
                                        {tree.map((r, i) => (
                                            <div key={i} className={`h-[22px] flex items-center whitespace-nowrap ${r.p} ${r.b ? 'font-bold text-black' : ''}`}>{r.t}</div>
                                        ))}
                                    </div>
                                </div>
                            </div>
                            <div className="w-[19px] flex flex-col items-center bg-[#efefef]">
                                <ChevronUp className="w-[14px] h-[14px] text-[#444] mt-[4px]" strokeWidth={2.400} />
                                <div className="w-[19px] h-[212px] bg-[#cdcdcd] mt-[3px]" />
                                <ChevronDown className="w-[14px] h-[14px] text-[#444] mt-auto mb-[3px]" strokeWidth={2.400} />
                            </div>
                        </div>
                        <div className="h-[20px] flex items-center w-[270px]">
                            <ChevronLeft className="w-[14px] h-[14px] text-[#444] ml-[2px]" strokeWidth={2.400} />
                            <div className="w-[194px] h-[19px] bg-[#cdcdcd] ml-[5px]" />
                            <ChevronRight className="w-[14px] h-[14px] text-[#444] ml-[18px]" strokeWidth={2.400} />
                        </div>
                    </div>
                </div>

                {/* View area */}
                <div className="ml-[2px] w-[1616px] flex flex-col shrink-0">
                    <div className="h-[25px] flex items-center shrink-0">
                        <div className="w-[161px] h-[25px] bg-white flex items-center text-[14.5px] leading-none font-semibold text-[#333]">
                            <Ic w={19} h={17} className="ml-[6px]">
                                <path d="M1 4h12l4 3v9H1z" fill="#eee" stroke="#555" />
                                <path d="M1 4V1h9l3 3M7 7h10" stroke="#555" />
                                <rect x="3" y="8" width="5" height="6" fill="#bbb" />
                            </Ic>
                            <span className="ml-[10px] w-[106px]">Level 1</span>
                            <X className="w-[15px] h-[15px] text-[#222]" strokeWidth={3} />
                        </div>
                        <CustomizeIco className="ml-auto mr-[6px]" />
                    </div>
                    <div className="h-[704px] flex bg-white shrink-0">
                        <div className="relative w-[1594px] h-[704px] overflow-hidden">
                            <Plan />
                            <NavBar />
                        </div>
                        <div className="w-[19px] bg-[#efefef] flex flex-col items-center">
                            <ChevronUp className="w-[14px] h-[14px] text-[#444] mt-[5px]" strokeWidth={2.400} />
                            <div className="w-[19px] h-px bg-[#ddd] mt-[3px]" />
                            <div className="w-[19px] h-[21px] bg-[#cdcdcd] mt-[210px]" />
                            <ChevronDown className="w-[14px] h-[14px] text-[#444] mt-auto mb-[3px]" strokeWidth={2.400} />
                        </div>
                    </div>
                    <div className="h-[19px] bg-[#eeeeee] flex items-center shrink-0">
                        <span className="ml-[14px] w-[69px] text-[13px] leading-none text-[#222] whitespace-nowrap">1/8" = 1'-0"</span>
                        {VIEW_ICONS}
                        <ChevronLeft className="ml-[7px] w-[14px] h-[14px] text-[#444]" strokeWidth={2.400} />
                        <div className="w-px h-[19px] bg-[#c8c8c8] ml-[4px]" />
                        <div className="w-[21px] h-[19px] bg-[#cdcdcd] ml-[388px]" />
                        <ChevronRight className="ml-[780px] w-[14px] h-[14px] text-[#444]" strokeWidth={2.400} />
                        <Ic w={10} h={10} className="ml-[12px] mt-[6px]">
                            <path d="M7 1h2v2H7zM4 4h2v2H4zM7 4h2v2H7zM1 7h2v2H1zM4 7h2v2H4zM7 7h2v2H7z" fill="#bbb" />
                        </Ic>
                    </div>
                    <div className="h-[4px] bg-white border-b-2 border-[#dcdcdc] shrink-0" />
                </div>
            </div>

            {/* Status bar */}
            <div className="h-[30px] bg-[#c8c8c8] flex items-center shrink-0 text-[14.3px] leading-none text-[#333] whitespace-pre">
                <span className="ml-[5px] w-[470px]">Enter wall end point.  Space flips orientation.</span>
                {STATUS_ICONS[0]}
                <div className="ml-[7px] w-[254px] h-[22px] bg-white flex items-center justify-end pr-[4px] shrink-0">
                    <ChevronDown className="w-[12px] h-[12px] text-[#a8a8a8]" strokeWidth={1.200} />
                </div>
                <Ic w={16} h={22} className="ml-[9px]">
                    <path d="M4 1h11v9H9l-3 3v-3H4z" fill="#aaa" stroke="#888" />
                    <path d="M5 13l-4 9h7l-1-9z" fill="#888" />
                </Ic>
                <span className="ml-[9px] w-[10px] text-[13px]">:0</span>
                <Ic w={20} h={22} className="ml-[25px]">
                    <rect x="1" y="1" width="18" height="20" rx="1" fill="#f2f2f2" stroke="#333" />
                    <path d="M1 4h18" stroke="#333" strokeWidth="3" />
                    <path d="M4 9h2M8 9h8M4 13h2M8 13h8M4 17h2M8 17h8" stroke="#333" strokeWidth="1.500" />
                </Ic>
                <Ic w={20} h={22} className="ml-[10px]">
                    <rect x="9" y="1" width="10" height="14" fill="#aaa" stroke="#999" />
                    <path d="M1 11h9v10H1z" fill="#ddd" stroke="#aaa" />
                    <path d="M4 16h9M10 13l3 3-3 3" stroke="#999" />
                </Ic>
                <div className="ml-[8px] w-[254px] h-[22px] bg-white flex items-center pl-[2px] pr-[4px] text-[14.5px] text-[#8a8a8a] shrink-0">
                    <span className="flex-1">Main Model</span>
                    <ChevronDown className="w-[12px] h-[12px] text-[#a8a8a8]" strokeWidth={1.200} />
                </div>
                <div className="ml-[278px] flex items-center gap-[9px]">{STATUS_ICONS.slice(1)}</div>
                <Ic w={22} h={24} className="ml-[9px]">
                    <path d="M1 2h20l-8 10v10l-4-2v-8z" fill="#c8c8c8" stroke="#444" strokeWidth="1.500" />
                </Ic>
                <span className="w-[10px] text-[13px]">:0</span>
            </div>
            <div className="h-[2px] bg-black shrink-0" />

            {/* markup arrow pasted over the shot */}
            <BigArrow />
        </div>
    );
}
